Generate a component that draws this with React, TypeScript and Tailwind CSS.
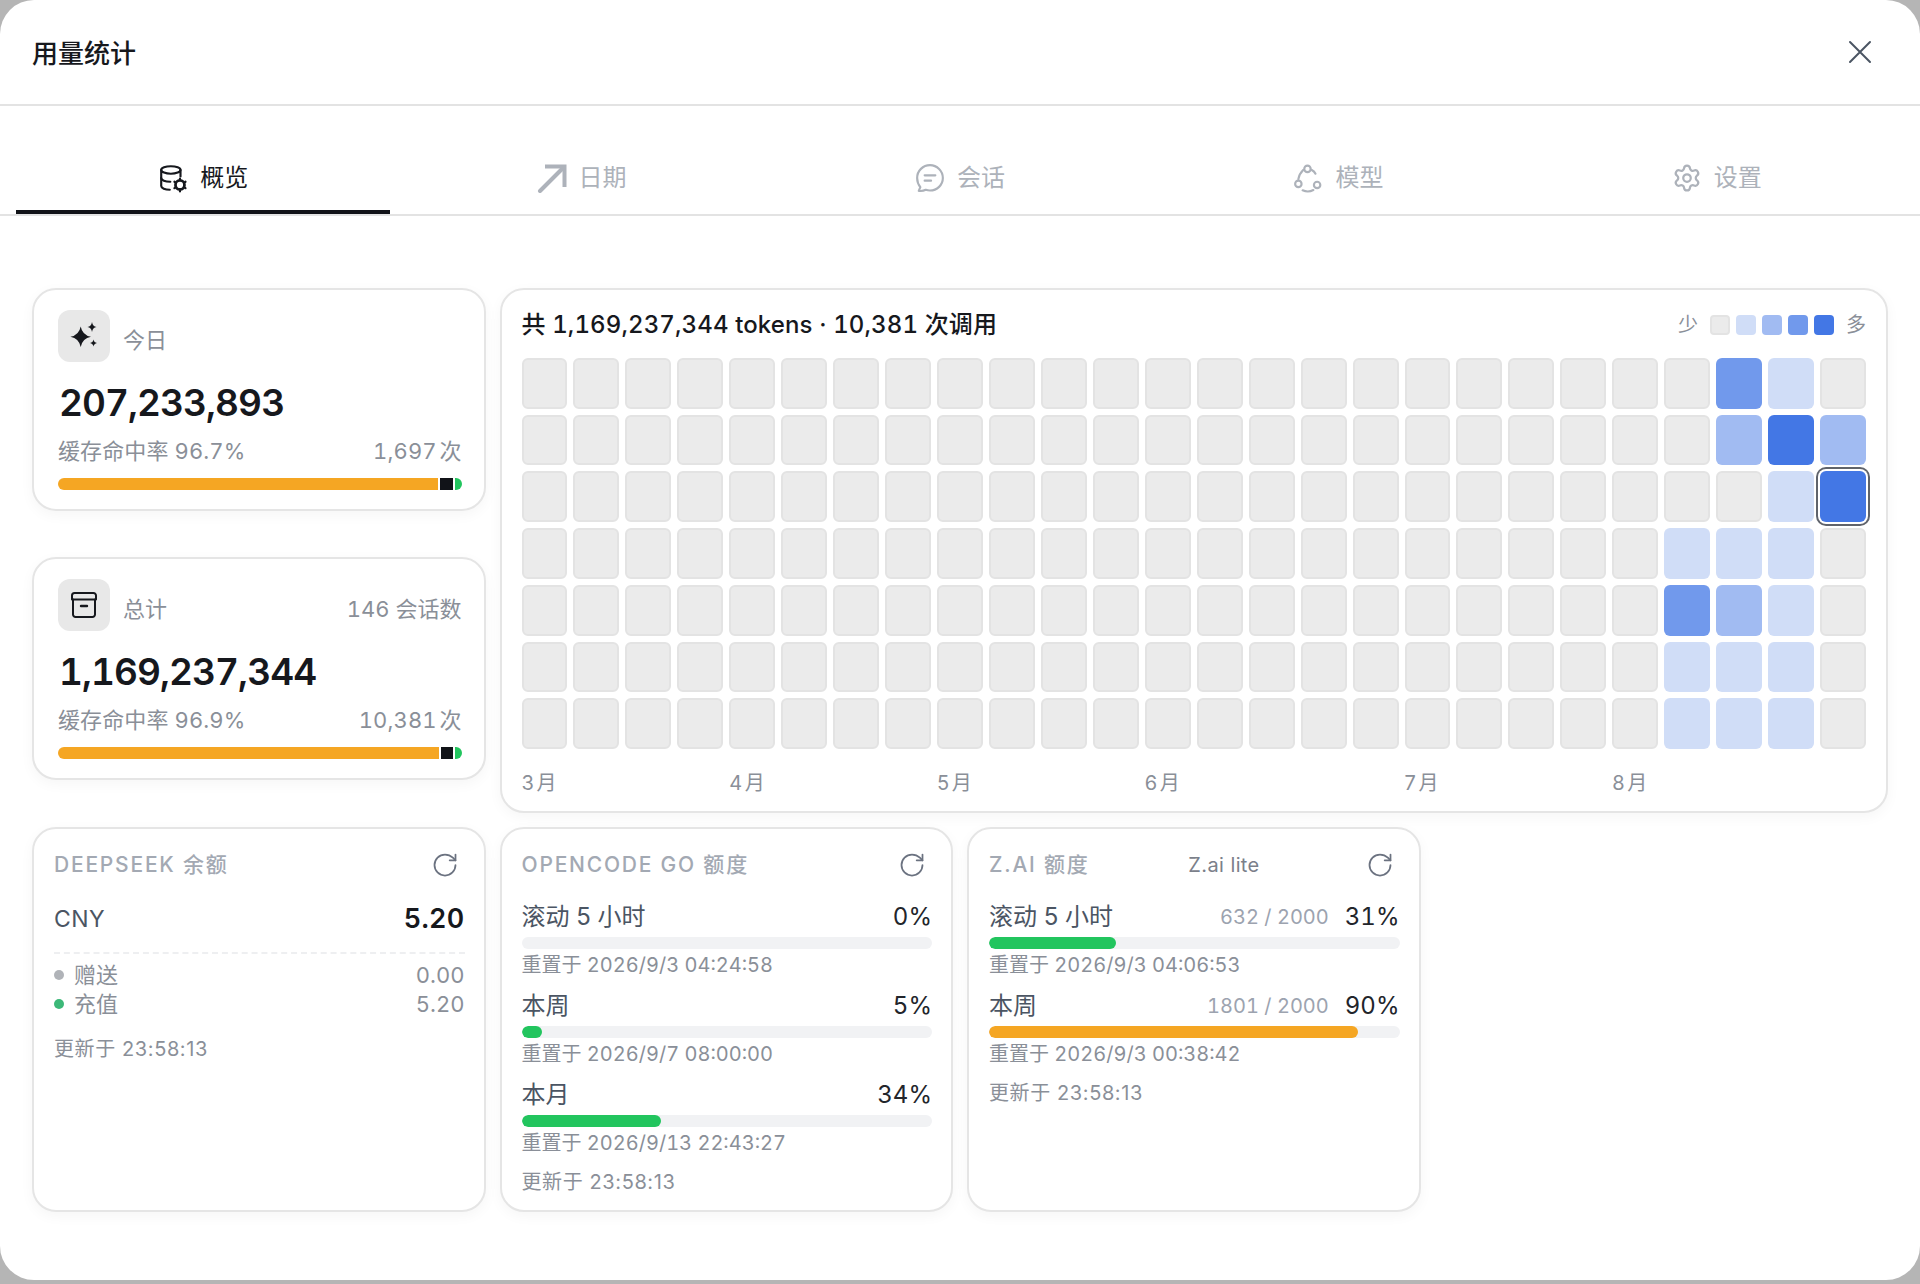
import React from 'react';
import { RotateCw, Settings } from 'lucide-react';

const DatabaseGearIcon = () => (
  <svg width="30" height="30" viewBox="0 0 28 28" fill="none" stroke="currentColor" strokeWidth="2" strokeLinecap="round" strokeLinejoin="round">
    <ellipse cx="12" cy="6.500" rx="9" ry="3.500" />
    <path d="M3 6.500v15c0 2 3.600 3.500 8 3.500" />
    <path d="M21 6.500v6" />
    <path d="M3 14c0 2 3.600 3.500 8.500 3.500" />
    <circle cx="20.500" cy="20.500" r="4.200" strokeWidth="2.600" />
    <path d="M20.500 14.500v1.500M20.500 25v1.500M15.300 17.500l1.300.8M24.400 22.700l1.300.8M15.300 23.500l1.300-.8M24.400 18.300l1.300-.8" strokeWidth="2" />
  </svg>
);

const ArrowIcon = () => (
  <svg width="30" height="30" viewBox="0 0 30 30" fill="none" stroke="currentColor" strokeWidth="4" strokeLinecap="round" strokeLinejoin="miter">
    <path d="M3 28 26 5" />
    <path d="M8 3.500h19.500V24" strokeLinecap="butt" />
  </svg>
);

const ChatIcon = () => (
  <svg width="30" height="30" viewBox="0 0 28 28" fill="none" stroke="currentColor" strokeWidth="2" strokeLinecap="round" strokeLinejoin="round">
    <path d="M5 22.500 3.500 26c3 .4 5.200-.3 6.500-1 1.200.4 2.600.7 4 .7 6.600 0 12-5.200 12-11.700S20.600 2 14 2 2 7.300 2 14c0 3.300 1.200 6.300 3 8.500Z" />
    <path d="M9 11.500h10M9 16.500h6" />
  </svg>
);

const ModelIcon = () => (
  <svg width="30" height="30" viewBox="0 0 28 28" fill="none" stroke="currentColor" strokeWidth="2" strokeLinecap="round">
    <circle cx="13.500" cy="5.500" r="3" />
    <circle cx="5" cy="19.500" r="3" />
    <circle cx="22.500" cy="20.500" r="3" />
    <path d="M17.500 6.500c1.500.8 2.800 2 3.500 3.500" />
    <path d="M9.500 6.500C7.500 8.500 5.500 11.500 5 15" />
    <path d="M9 25.500c3 1.300 7 1.300 10-.3" />
  </svg>
);

const SparklesIcon = () => (
  <svg width="28" height="28" viewBox="0 0 28 28" fill="#16181d">
    <path d="M10.700 4.400Q12.300 13.100 21 14.700 12.300 16.300 10.700 25 9.100 16.300 .4 14.700 9.100 13.100 10.700 4.400Z" />
    <path d="M22 0Q22.700 4.300 26.500 5 22.700 5.700 22 10 21.300 5.700 17.500 5 21.300 4.300 22 0Z" />
    <path d="M23.500 17.500Q24 20.500 27 21 24 21.500 23.500 24.500 23 21.500 20 21 23 20.500 23.500 17.500Z" />
  </svg>
);

const ArchiveIcon = () => (
  <svg width="28" height="28" viewBox="0 0 28 28" fill="none" stroke="#16181d" strokeWidth="2" strokeLinecap="round" strokeLinejoin="round">
    <path d="M2 8.500V4.500A2.500 2.500 0 0 1 4.500 2h19A2.500 2.500 0 0 1 26 4.500v4z" />
    <path d="M3 8.500V23.500A2.500 2.500 0 0 0 5.500 26h17a2.500 2.500 0 0 0 2.500-2.500V8.500" />
    <path d="M11 15h6" strokeWidth="2.400" />
  </svg>
);

const CloseIcon = () => (
  <svg width="24" height="24" viewBox="0 0 24 24" fill="none" stroke="#4b5563" strokeWidth="2" strokeLinecap="round">
    <path d="M2 2l20 20M22 2 2 22" />
  </svg>
);

const tabs = [
  { label: '概览', icon: <DatabaseGearIcon /> },
  { label: '日期', icon: <ArrowIcon /> },
  { label: '会话', icon: <ChatIcon /> },
  { label: '模型', icon: <ModelIcon /> },
  { label: '设置', icon: <Settings size={30} strokeWidth={1.8} /> }
];

// levels by row: column index -> level
const activeCells: Record<string, number> = {
  '0-23': 3, '0-24': 1,
  '1-23': 2, '1-24': 4, '1-25': 2,
  '2-24': 1, '2-25': 4,
  '3-22': 1, '3-23': 1, '3-24': 1,
  '4-22': 3, '4-23': 2, '4-24': 1,
  '5-22': 1, '5-23': 1, '5-24': 1,
  '6-22': 1, '6-23': 1, '6-24': 1
};

const levelClass = [
  'bg-[#ebebeb] border-2 border-[#e3e3e3]',
  'bg-[#d0ddf7]',
  'bg-[#a1bbf2]',
  'bg-[#7199ec]',
  'bg-[#4377e5]'
];

const months = [
  { label: '3 月', span: 'col-span-4' },
  { label: '4 月', span: 'col-span-4' },
  { label: '5 月', span: 'col-span-4' },
  { label: '6 月', span: 'col-span-5' },
  { label: '7 月', span: 'col-span-4' },
  { label: '8 月', span: 'col-span-5' }
];

const Card: React.FC<{ className?: string; children: React.ReactNode }> = ({ className = '', children }) => (
  <div className={`rounded-[24px] border-2 border-[#e5e5e5] bg-white shadow-[0_4px_14px_rgba(0,0,0,0.04)] ${className}`}>
    {children}
  </div>
);

interface SummaryProps {
  icon: React.ReactNode;
  title: string;
  extra?: string;
  value: string;
  rate: string;
  calls: string;
  orange: string;
  black: string;
}

const SummaryCard: React.FC<SummaryProps> = ({ icon, title, extra, value, rate, calls, orange, black }) => (
  <Card className="h-[223px] pt-[20px] pr-[22px] pl-[24px]">
    <div className="flex items-center justify-between">
      <div className="flex items-center gap-[13px]">
        <div className="flex h-[52px] w-[52px] items-center justify-center rounded-[12px] bg-[#e8e8e8]">{icon}</div>
        <span className="mt-[8px] text-[22px] text-[#8a8f98]">{title}</span>
      </div>
      {extra && <span className="mt-[8px] text-[22px] tabular-nums text-[#8a8f98]">{extra}</span>}
    </div>
    <div className="mt-[18px] pl-[1px] text-[37px] leading-[46px] font-semibold tracking-[-0.025em] tabular-nums text-[#16181d]">{value}</div>
    <div className="mt-[11px] flex items-center justify-between text-[22px] leading-[28px] tracking-[0.005em] tabular-nums text-[#8a8f98]">
      <span>{rate}</span>
      <span>{calls}</span>
    </div>
    <div className="mt-[13px] flex h-[12px] gap-[2px] overflow-hidden rounded-full">
      <div className={`${orange} bg-[#f5a623]`} />
      <div className={`${black} bg-[#111318]`} />
      <div className="flex-1 bg-[#22c55e]" />
    </div>
  </Card>
);

const CardHeader: React.FC<{ title: string; plan?: string }> = ({ title, plan }) => (
  <div className="flex h-[28px] items-center justify-between">
    <span className="text-[21px] font-medium tracking-[0.085em] text-[#a3a9b3]">{title}</span>
    {plan && <span className="mr-[7px] text-[20px] tracking-[0.02em] text-[#7b808a]">{plan}</span>}
    <RotateCw size={28} strokeWidth={1.5} className="mr-[6px] text-[#6b7280]" />
  </div>
);

interface QuotaProps {
  label: string;
  percent: number;
  color: string;
  reset: string;
  usage?: string;
}

const QuotaRow: React.FC<QuotaProps> = ({ label, percent, color, reset, usage }) => (
  <div className="h-[89px]">
    <div className="flex h-[32px] items-center justify-between">
      <span className="text-[24px] text-[#4b5563]">{label}</span>
      <div className="flex items-center gap-[16px]">
        {usage && <span className="text-[20px] tabular-nums text-[#9ca3af]">{usage}</span>}
        <span className="text-[24px] tabular-nums text-[#22252b]">{percent}%</span>
      </div>
    </div>
    <div className="mt-[4px] h-[12px] overflow-hidden rounded-full bg-[#f1f2f4]">
      {/* the fill width comes from the data */}
      <div className={`h-full rounded-full ${color}`} style={{ width: `${percent}%` }} />
    </div>
    <div className="mt-[2px] text-[20px] leading-[28px] tabular-nums text-[#8a8f98]">{reset}</div>
  </div>
);

export default function App() {
  return (
    <div
      className="h-[1284px] w-[1920px] bg-[#b5b5b5] [text-autospace:normal]"
      style={{ fontFamily: 'Inter, "Noto Sans CJK SC", sans-serif' }}
    >
      <div className="h-[1280px] overflow-hidden rounded-[34px] bg-white">
        <div className="flex h-[106px] items-center justify-between border-b-2 border-[#e3e3e3] pr-[48px] pl-[32px]">
          <h1 className="mt-[2px] text-[26px] font-medium text-[#16181d]">用量统计</h1>
          <CloseIcon />
        </div>

        <div className="flex h-[110px] gap-1 border-b-2 border-[#e3e3e3] px-4">
          {tabs.map((tab, i) => (
            <div
              key={tab.label}
              className={`flex h-[108px] flex-1 items-end justify-center gap-[12px] border-b-4 pb-[17px] ${
                i === 0 ? 'border-[#111318] text-[#16181d]' : 'border-transparent text-[#adb2ba]'
              }`}
            >
              {tab.icon}
              <span className="text-[24px] leading-[30px]">{tab.label}</span>
            </div>
          ))}
        </div>

        <div className="grid grid-cols-4 gap-[14px] px-[32px] pt-[72px]">
          <div className="flex flex-col gap-[46px]">
            <SummaryCard
              icon={<SparklesIcon />}
              title="今日"
              value="207,233,893"
              rate="缓存命中率 96.7%"
              calls="1,697次"
              orange="w-[380px]"
              black="w-[13px]"
            />
            <SummaryCard
              icon={<ArchiveIcon />}
              title="总计"
              extra="146 会话数"
              value="1,169,237,344"
              rate="缓存命中率 96.9%"
              calls="10,381次"
              orange="w-[381px]"
              black="w-[12px]"
            />
          </div>

          <Card className="col-span-3 h-[525px] px-[20px] pt-[16px]">
            <div className="flex h-[38px] items-center justify-between">
              <span className="text-[24px] font-medium tracking-[0.005em] tabular-nums text-[#16181d]">共 1,169,237,344 tokens · 10,381 次调用</span>
              <div className="flex items-center text-[20px] text-[#8a8f98]">
                <span className="mr-[12px]">少</span>
                <div className="flex gap-[6px]">
                  {levelClass.map((cls) => (
                    <div key={cls} className={`h-[20px] w-[20px] rounded-[4px] ${cls}`} />
                  ))}
                </div>
                <span className="ml-[12px]">多</span>
              </div>
            </div>

            <div className="mt-[14px] grid h-[391px] grid-cols-[repeat(26,1fr)] grid-rows-7 gap-[6px]">
              {Array.from({ length: 7 }).flatMap((_, row) =>
                Array.from({ length: 26 }).map((_, col) => {
                  const level = activeCells[`${row}-${col}`] ?? 0;
                  const selected = row === 2 && col === 25;
                  return (
                    <div
                      key={`${row}-${col}`}
                      className={`rounded-[6px] ${levelClass[level]} ${
                        selected ? 'shadow-[0_0_0_2px_#ffffff,0_0_0_4px_#5f636b]' : ''
                      }`}
                    />
                  );
                })
              )}
            </div>

            <div className="mt-[20px] grid grid-cols-[repeat(26,1fr)] gap-x-[6px] text-[20px] leading-[28px] [word-spacing:-3px] text-[#8a8f98]">
              {months.map((m) => (
                <span key={m.label} className={m.span}>{m.label}</span>
              ))}
            </div>
          </Card>

          <Card className="h-[385px] pt-[22px] pr-[19px] pl-[20px]">
            <CardHeader title="DEEPSEEK 余额" />
            <div className="mt-[23px] flex h-[34px] items-center justify-between">
              <span className="text-[23px] tracking-[0.02em] text-[#4b5563]">CNY</span>
              <span className="text-[27px] font-semibold tracking-[0.01em] tabular-nums text-[#16181d]">5.20</span>
            </div>
            <div className="mt-[16px] border-t-2 border-dashed border-[#eeeff1]" />
            <div className="mt-[7px] flex flex-col gap-[1px] text-[22px] leading-[28px] text-[#8a8f98]">
              <div className="flex items-center justify-between">
                <span className="flex items-center gap-[10px]">
                  <span className="h-[10px] w-[10px] rounded-full bg-[#b0b3b8]" />
                  赠送
                </span>
                <span className="tabular-nums">0.00</span>
              </div>
              <div className="flex items-center justify-between">
                <span className="flex items-center gap-[10px]">
                  <span className="h-[10px] w-[10px] rounded-full bg-[#3cb878]" />
                  充值
                </span>
                <span className="tabular-nums">5.20</span>
              </div>
            </div>
            <div className="mt-[17px] text-[20px] leading-[28px] tracking-[0.03em] text-[#8a8f98]">更新于 23:58:13</div>
          </Card>

          <Card className="h-[385px] pt-[22px] pr-[19px] pl-[20px]">
            <CardHeader title="OPENCODE GO 额度" />
            <div className="mt-[22px]">
              <QuotaRow label="滚动 5 小时" percent={0} color="bg-[#22c55e]" reset="重置于 2026/9/3 04:24:58" />
              <QuotaRow label="本周" percent={5} color="bg-[#22c55e]" reset="重置于 2026/9/7 08:00:00" />
              <QuotaRow label="本月" percent={34} color="bg-[#22c55e]" reset="重置于 2026/9/13 22:43:27" />
            </div>
            <div className="text-[20px] leading-[28px] tracking-[0.03em] text-[#8a8f98]">更新于 23:58:13</div>
          </Card>

          <Card className="h-[385px] pt-[22px] pr-[19px] pl-[20px]">
            <CardHeader title="Z.AI 额度" plan="Z.ai lite" />
            <div className="mt-[22px]">
              <QuotaRow label="滚动 5 小时" usage="632 / 2000" percent={31} color="bg-[#22c55e]" reset="重置于 2026/9/3 04:06:53" />
              <QuotaRow label="本周" usage="1801 / 2000" percent={90} color="bg-[#f5a623]" reset="重置于 2026/9/3 00:38:42" />
            </div>
            <div className="text-[20px] leading-[28px] tracking-[0.03em] text-[#8a8f98]">更新于 23:58:13</div>
          </Card>
        </div>
      </div>
    </div>
  );
}
